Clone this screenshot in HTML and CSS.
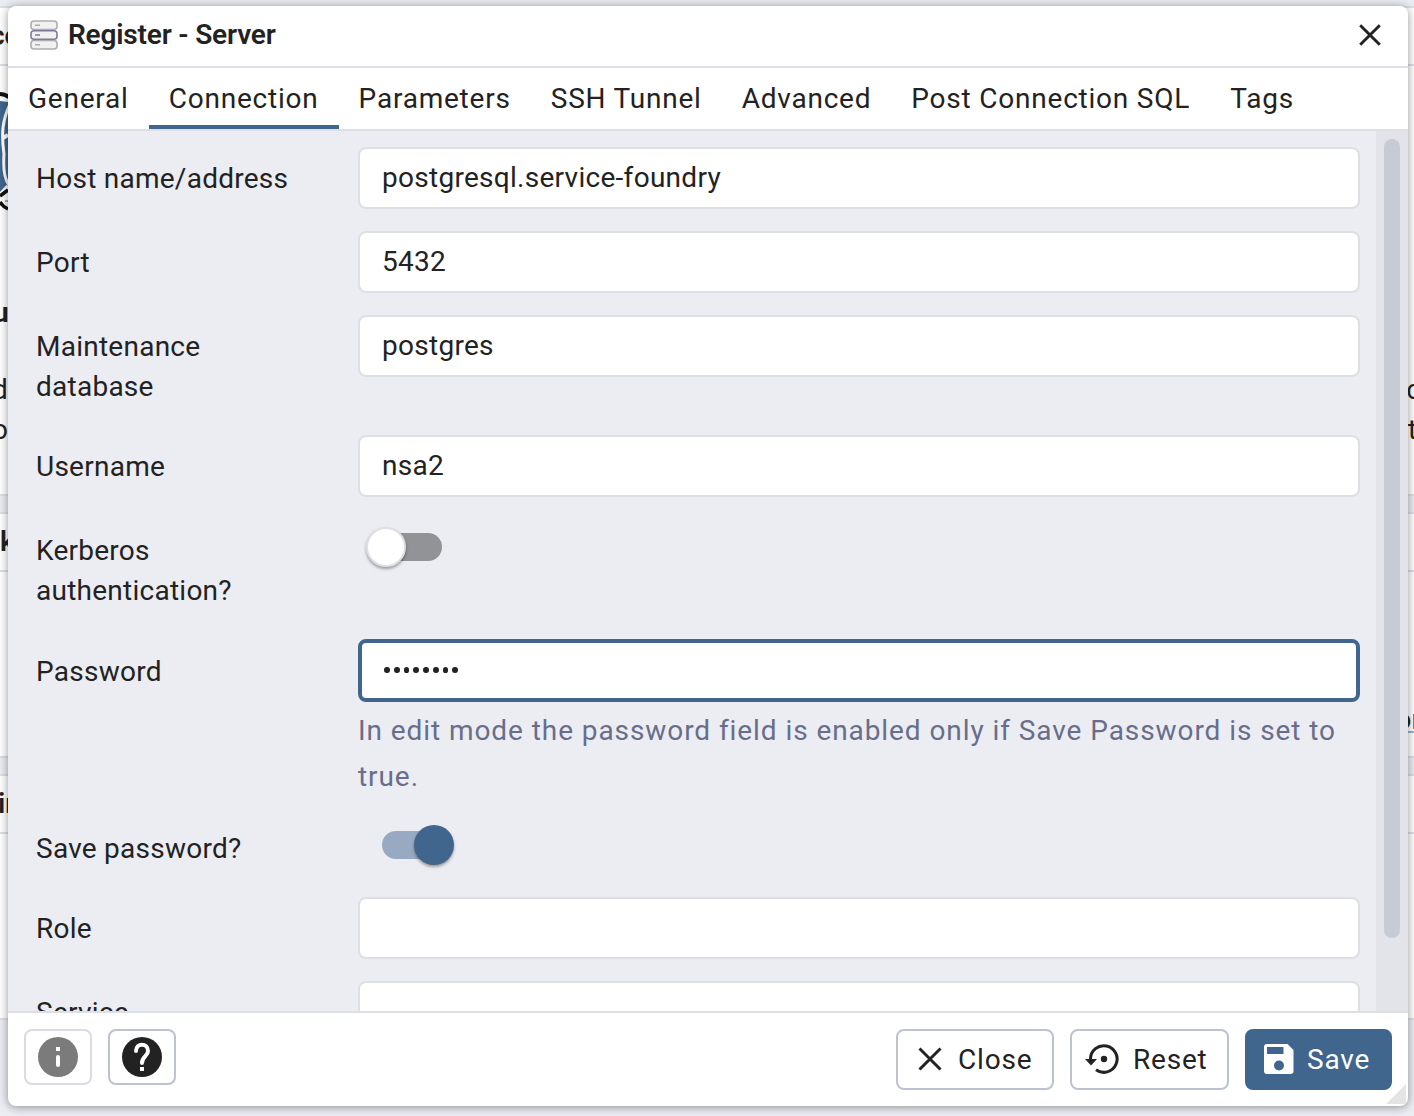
FILE: index.html
```html
<!DOCTYPE html>
<html lang="en">
<head>
<meta charset="utf-8">
<title>Register - Server</title>
<link rel="stylesheet" href="styles.css">
</head>
<body>
<main class="dashboard" aria-hidden="true">
  <section class="card card-welcome">
    <h2 class="card-title"><span class="frag-co">co</span></h2>
    <div class="card-body">
      <svg class="elephant" width="8" height="120" viewBox="0 0 8 120"><path d="M0 9L8 10V98L0 104Z" fill="#40668d"/><path d="M0 2C3 2 6 3 9 5" stroke="#111" stroke-width="4" fill="none"/><path d="M9 14C3 28 1 40 4 62C3 78 5 88 9 93" stroke="#fff" stroke-width="3" fill="none"/><path d="M3 46L8 43" stroke="#fff" stroke-width="4"/><path d="M-1 104L8 94" stroke="#fff" stroke-width="4"/><path d="M0 105L8 98V117Q2 115 0 110Z" fill="#fff"/><path d="M0 104L8 98M0 110Q3 115 8 117" fill="none" stroke="#111" stroke-width="3.5"/><path d="M5 109H8" stroke="#40668d"/></svg>
      <b class="frag-u">u</b>
      <span class="line line-first"><i class="frag-d">d</i><i class="frag-c">c</i></span>
      <span class="line"><i class="frag-o">o</i><i class="frag-t">t</i></span>
    </div>
  </section>
  <section class="card card-links">
    <h2 class="card-title"><span class="frag-k">k</span></h2>
    <div class="card-body"><span class="line line-link"><i></i><i class="link">or</i></span></div>
  </section>
  <section class="card card-start">
    <h2 class="card-title"><span class="frag-in">in</span></h2>
  </section>
</main>

<div class="dialog" role="dialog">
  <header class="dialog-header">
    <svg class="server-icon" width="28" height="30" viewBox="0 0 28 30" fill="#f1f1f1" stroke-width="1.6"><g stroke="#adadad"><rect x="1" y="1" width="26" height="8.5" rx="3"/><rect x="1" y="20.5" width="26" height="8.5" rx="3"/><path d="M5 5.2H10M5 24.7H10"/></g><g stroke="#7b7b9e"><rect x="1" y="10.7" width="26" height="8.5" rx="3"/><path d="M5 15H10"/></g></svg>
    <h1 class="dialog-title">Register - Server</h1>
    <svg class="dialog-close" width="22" height="22" viewBox="0 0 22 22"><path d="M1.2 1.2L20.8 20.8M20.8 1.2L1.2 20.8" stroke="#222" stroke-width="2.9"/></svg>
  </header>
  <nav class="tabs">
    <a class="tab">General</a><a class="tab tab-active">Connection</a><a class="tab">Parameters</a><a class="tab">SSH Tunnel</a><a class="tab">Advanced</a><a class="tab">Post Connection SQL</a><a class="tab">Tags</a>
  </nav>
  <div class="content">
    <form class="form">
      <div class="row"><label>Host name/address</label><div class="field">postgresql.service-foundry</div></div>
      <div class="row"><label>Port</label><div class="field">5432</div></div>
      <div class="row row-two"><label>Maintenance<br>database</label><div class="field">postgres</div></div>
      <div class="row"><label>Username</label><div class="field">nsa2</div></div>
      <div class="row row-kerberos"><label>Kerberos<br>authentication?</label><div class="switch"><span class="knob"></span></div></div>
      <div class="row row-password"><label>Password</label><div><div class="field field-focus"><span class="dots"><i></i><i></i><i></i><i></i><i></i><i></i><i></i><i></i></span></div><p class="help">In edit mode the password field is enabled only if Save Password is set to true.</p></div></div>
      <div class="row row-save"><label>Save password?</label><div class="switch switch-on"><span class="knob"></span></div></div>
      <div class="row"><label>Role</label><div class="field"></div></div>
      <div class="row"><label>Service</label><div class="field"></div></div>
    </form>
    <div class="scrollbar"><div class="thumb"></div></div>
  </div>
  <footer class="dialog-footer">
    <button class="icon-btn icon-btn-disabled"><svg width="40" height="40" viewBox="0 0 40 40"><circle cx="20" cy="20" r="20" fill="#7b7b7b"/><path d="M18 10H22V14H18Z" fill="#fff"/><path d="M20 20V28" stroke="#fff" stroke-width="4" stroke-linecap="round"/></svg></button>
    <button class="icon-btn"><svg width="40" height="40" viewBox="0 0 40 40"><circle cx="20" cy="20" r="20" fill="#222"/><path d="M14 14C14 5.500 26 5.500 26 14C26 19 20 19.500 20 26" stroke="#fff" stroke-width="4" fill="none" stroke-linecap="round"/><path d="M18 24H22V26H18ZM18 30H22V34H18Z" fill="#fff"/></svg></button>
    <span class="spacer"></span>
    <button class="btn btn-close"><svg width="24" height="24" viewBox="0 0 24 24"><path d="M1.500 1.500L22.500 22.500M22.500 1.500L1.500 22.500" stroke="#222" stroke-width="3"/></svg>Close</button>
    <button class="btn btn-reset"><svg width="34" height="30" viewBox="0 0 34 30"><path d="M5.500 15A13.300 13.300 0 1 1 11 25.800" stroke="#222" stroke-width="3" fill="none"/><path d="M0 15H12L6 21.500Z" fill="#222"/><circle cx="19" cy="15" r="3.200" fill="#222"/></svg>Reset</button>
    <button class="btn btn-save"><svg width="30" height="30" viewBox="0 0 30 30"><path d="M3 0H23.500L29.500 6V27Q29.500 30 26.500 30H3Q0 30 0 27V3Q0 0 3 0Z" fill="#fff"/><path d="M3 3H19.500V10H3Z" fill="#40668d"/><circle cx="15" cy="21.500" r="5" fill="#40668d"/></svg>Save</button>
    <svg class="resize" width="20" height="20" viewBox="0 0 20 20"><path d="M20 0V20H0Z" fill="#e4e4e4"/></svg>
  </footer>
</div>
</body>
</html>
```
FILE: styles.css
```css
* { box-sizing: border-box; }
body {
  margin: 0;
  width: 1414px;
  height: 1116px;
  overflow: hidden;
  position: relative;
  background: #ecedf3;
  color: #222;
  font-family: Roboto, sans-serif;
  font-size: 28px;
}
i { font-style: normal; }

/* Dashboard behind the dialog */
.dashboard { display: flex; flex-direction: column; gap: 16px; padding-top: 6px; }
.card { background: #fff; border: solid #dedfe5; border-width: 2px 0; overflow: hidden; }
.card-welcome { height: 490px; }
.card-links { height: 246px; }
.card-start { height: 246px; }
.card-title { margin: 0; height: 58px; line-height: 56px; border-bottom: 2px solid #dedfe5; font-size: 28px; font-weight: 600; }
.card-title span { display: inline-block; }
.card-body { display: flex; flex-direction: column; line-height: 40px; }
.frag-co { margin-left: -10px; }
.frag-in { margin-left: -2px; }
.elephant { margin-top: 26px; display: block; }
.frag-u { margin: 81px 0 0 -7px; font-weight: 700; }
.line { display: flex; justify-content: space-between; height: 40px; width: 1420px; }
.line-first { margin-top: 37px; }
.frag-d, .frag-o { margin-left: -8px; }
.frag-c { margin-right: -1px; }
.frag-t { margin-right: 3px; }
.line-link { margin-top: 128px; }
.link { height: 33px; line-height: 40px; border-bottom: 2px solid #9db1c6; margin-right: -1px; }

/* Dialog shell */
.dialog {
  position: absolute;
  left: 8px;
  top: 6px;
  width: 1400px;
  height: 1100px;
  display: flex;
  flex-direction: column;
  background: #fff;
  border-radius: 8px;
  overflow: hidden;
  box-shadow: 0 1px 10px rgba(0, 0, 0, .42);
}
.dialog-header { flex: none; height: 62px; display: flex; align-items: center; padding: 0 27px 2px 22px; border-bottom: 2px solid #dedfe5; }
.dialog-title { margin: -2px auto 0 10px; font-size: 28px; font-weight: 600; letter-spacing: -.18px; }

.tabs { flex: none; height: 63px; display: flex; border-bottom: 2px solid #dedfe5; }
.tab { padding: 0 20px; line-height: 62px; height: 61px; letter-spacing: .785px; }
.tab-active { border-bottom: 4px solid #40668d; }

.content { flex: none; height: 880px; display: flex; overflow: hidden; background: #ecedf3; }
.form { width: 1368px; flex: none; padding: 16px 16px 0 28px; display: flex; flex-direction: column; }
.scrollbar { width: 32px; padding: 8px; background: #e3e4ea; }
.thumb { height: 799px; border-radius: 8px; background: #c7cbd4; }

/* Form rows */
.row { flex: none; display: grid; grid-template-columns: 322px 1002px; height: 84px; align-items: start; }
.row label { padding-top: 12px; line-height: 40px; letter-spacing: .25px; }
.row-two { height: 120px; }
.row-kerberos { height: 120px; }
.row-password { height: 178px; }
.row-password label { padding-top: 13px; }
.row-save { height: 80px; }
.field { height: 62px; padding-left: 22px; border: 2px solid #dedfe5; border-radius: 8px; background: #fff; line-height: 58px; letter-spacing: .28px; }
.field-focus { height: 63px; padding-left: 22px; border: 4px solid #40668d; }
.dots { display: flex; gap: 4px; height: 53px; align-items: center; }
.dots i { width: 5.75px; height: 6px; border-radius: 50%; background: #222; }
.help { margin: 6px 0 0; line-height: 46px; letter-spacing: .925px; color: #686e8a; }

.switch { width: 60px; height: 28px; margin: 14px 0 0 24px; border-radius: 14px; background: #929397; }
.knob { display: block; width: 40px; height: 40px; margin-left: -16px; border: 2px solid #dedfe5; border-radius: 50%; background: #fff; box-shadow: 0 2px 3px rgba(0, 0, 0, .35); transform: translateY(-6px); }
.switch-on { background: #98aac2; }
.switch-on .knob { margin-left: 32px; border: 0; background: #40668d; }

/* Footer */
.dialog-footer { flex: 1; display: flex; align-items: flex-start; gap: 16px; padding: 16px; border-top: 2px solid #dedfe5; position: relative; }
.spacer { flex: 1; }
button { font: inherit; color: #222; background: #fff; border: 2px solid #bdc1d1; border-radius: 8px; display: flex; align-items: center; }
.icon-btn { width: 68px; height: 56px; padding: 0; justify-content: center; }
.icon-btn-disabled { border-color: #d9dce5; }
.btn { height: 61px; padding: 0; letter-spacing: .8px; }
.btn svg { margin-top: -1px; }
.btn-close { width: 158px; padding-left: 20px; gap: 16px; }
.btn-reset { width: 159px; padding-left: 13px; gap: 14px; }
.btn-save { width: 147px; padding-left: 17px; gap: 13px; color: #fff; background: #40668d; border-color: #40668d; }
.resize { position: absolute; right: 2px; bottom: 2px; }
```
